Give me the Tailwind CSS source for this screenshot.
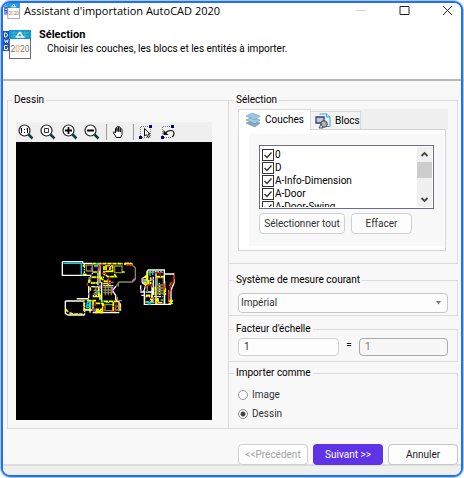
<!DOCTYPE html>
<html lang="fr">
<head>
    <meta charset="UTF-8">
    <meta name="viewport" content="width=device-width, initial-scale=1.0">
    <title>Assistant d'importation AutoCAD 2020</title>
    <script src="https://cdn.jsdelivr.net/npm/@tailwindcss/browser@4"></script>
</head>
<body class="bg-white text-black text-[10px] leading-[14px] font-[Roboto,sans-serif]">
    <svg class="hidden">
        <symbol id="dwg" viewBox="0 0 28 29">
            <rect x="0" y="1" width="6" height="20" fill="#1d4fc0"/>
            <path d="M1.500 3h2l1 2-1 2h-2zM1.500 9.500l1 3 1-2 1 2 .5-3M4.500 15.500h-3v4h3v-2" fill="none" stroke="#fff" stroke-width="1"/>
            <rect x="6.500" y=".5" width="21" height="28" fill="#fff" stroke="#666d78"/>
            <rect x="6" y="0" width="22" height="9" fill="#1397cc"/>
            <path d="M8 3h18M8 6h18M11 1v7M22 1v7" stroke="#5bc3e6" stroke-width=".6"/>
            <path d="M12.500 7h9M17 2l-3 4M17 2l3 5" stroke="#fff" stroke-width="1.500"/>
            <text x="7.500" y="21.500" font-size="8.500" fill="#777">2<tspan fill="#f29a1f">0</tspan>20</text>
        </symbol>
        <symbol id="magnifier" viewBox="0 0 16 16">
            <circle cx="6.500" cy="6.500" r="5.500" fill="#fff" stroke="#222" stroke-width="1.200"/>
            <path d="M10.500 10.500l4 4" stroke="#123c3c" stroke-width="2.500"/>
        </symbol>
        <symbol id="tick" viewBox="0 0 12 12">
            <path d="M2.500 6l2.500 2.500 4.500-5" fill="none" stroke="#333" stroke-width="1.300"/>
        </symbol>
    </svg>

    <div class="flex min-h-screen bg-[#a9cbff] rounded-[10px] p-px">
        <div class="flex min-w-0 flex-1 flex-col overflow-hidden rounded-[9px] border-2 border-[#1f6ffb] bg-[#f8f8f8]">
            <header class="h-[78px] border-b-2 border-[#b9b9b9] bg-white">
                <div class="flex h-[15px] items-center">
                    <svg class="ml-px h-4 w-4"><use href="#dwg"/></svg>
                    <h1 class="ml-1 flex-1 font-['Open_Sans',sans-serif] text-[11px]">Assistant d'importation AutoCAD 2020</h1>
                    <div class="flex items-center gap-8 pr-2">
                        <button type="button" aria-label="Réduire" disabled><svg class="h-[11px] w-[11px]"><path d="M0 5.500h10" stroke="#d2d2d2"/></svg></button>
                        <button type="button" aria-label="Agrandir"><svg class="h-[11px] w-[11px]"><path d="M1 1.500h9v8h-9z" fill="none" stroke="#222"/></svg></button>
                        <button type="button" aria-label="Fermer"><svg class="h-[11px] w-[11px]"><path d="M1 1l9 9M10 1l-9 9" stroke="#222"/></svg></button>
                    </div>
                </div>
                <div class="flex pt-2.5">
                    <svg class="mt-0.5 h-[29px] w-7"><use href="#dwg"/></svg>
                    <div class="ml-2">
                        <h2 class="text-[11px] font-bold">Sélection</h2>
                        <p class="ml-2">Choisir les couches, les blocs et les entités à importer.</p>
                    </div>
                </div>
            </header>

            <main class="flex flex-1 pt-3 pr-[3px] pl-1">
                <fieldset class="flex min-w-0 flex-1 flex-col border border-[#dcdcdc] px-2 pb-2">
                    <legend class="-ml-1 px-0.5">Dessin</legend>
                    <div class="mt-[15px] mr-2 flex h-5 items-center gap-[6px] bg-[#efefef] pl-0.5">
                        <button type="button" aria-label="Zoom 1:1"><svg class="h-4 w-4"><use href="#magnifier"/><path d="M3.500 4v5M9.500 4v5M6.500 5v1M6.500 8v1M2.500 5h1M8.500 5h1" stroke="#000"/></svg></button>
                        <button type="button" aria-label="Zoom fenêtre"><svg class="h-4 w-4"><use href="#magnifier"/><path d="M4.500 4.500h4v4h-4z" fill="none" stroke="#333"/></svg></button>
                        <button type="button" aria-label="Zoom avant"><svg class="h-4 w-4"><use href="#magnifier"/><path d="M3 6.500h7M6.500 3v7" stroke="#000" stroke-width="1.800"/></svg></button>
                        <button type="button" aria-label="Zoom arrière"><svg class="h-4 w-4"><use href="#magnifier"/><path d="M3 6.500h7" stroke="#000" stroke-width="1.800"/></svg></button>
                        <span class="-mr-0.5 h-4 w-px bg-[#9a9a9a]"></span>
                        <button type="button" aria-label="Déplacer"><svg class="h-4 w-4"><path d="M5.500 13.500l-3-4.500c-.5-1.500 1-1.500 2 0V4.500c0-1 1.500-1 1.500 0V7.500 3c0-1 1.700-1 1.700 0v4.500V3.500c0-1 1.600-1 1.600 0v4.500V5.500c0-1 1.700-1 1.700 0v5l-1.500 3z" fill="#fff" stroke="#111"/></svg></button>
                        <span class="-mr-0.5 h-4 w-px bg-[#9a9a9a]"></span>
                        <button type="button" aria-label="Sélectionner"><svg class="h-4 w-4"><path d="M2.500 12V2.500H11M4 13.500h8.500V4" fill="none" stroke="#777" stroke-dasharray="1 1"/><path d="M6.500 4.500v7.500l2-1.500 1.500 3 1.500-1-1.500-2.500h2z" fill="#fff" stroke="#111"/><path d="M1 12h3v3H1zM11 1h3v3h-3z" fill="#00007c"/></svg></button>
                        <button type="button" aria-label="Annuler la sélection"><svg class="h-4 w-4"><path d="M2.500 12V2.500H12M4 13.500h8" fill="none" stroke="#777" stroke-dasharray="1 1"/><path d="M5 9.500c3-4 9-4 9 0 0 2-1 3-2 3.500" fill="none" stroke="#111" stroke-width="1.200"/><path d="M3.500 6v5h5z" fill="#111"/><path d="M1 12h3v3H1zM11 1h3v3h-3z" fill="#00007c"/></svg></button>
                    </div>
                    <div class="mr-2 flex flex-1 items-center justify-center bg-black pt-[18px] pl-1.5">
                        <svg class="h-20 w-[135px]" viewBox="0 0 405 240" fill="none" stroke-width="4" role="img" aria-label="Plan d'étage">
                            <!-- left building -->
                            <g stroke="#fff">
                                <path d="M37 35h61v5M37 35v41h60M98 40h29M98 76h24v6M46 153h58M46 153v38l10 4h48M80 146h34v8M118 82v14M150 44v55M116 108v36M124 110h28M120 153v35M128 188h80M155 96v60M175 86v22M198 108l-10 14 9 14v12l10 8v28M104 180h24M144 68v38M222 42h26M160 107h30"/>
                                <path d="M103 40v36M127 44v30M104 158v36M128 136h26M136 110v20" stroke-dasharray="5 3"/>
                            </g>
                            <g stroke="#8a8845">
                                <path d="M245 44l11 10v34l-9 8h-40l-8 12M205 96v14M46 39h47M132 50h16v12M109 45h18v18h-18zM194 48h22v20h-22zM202 140v16M80 149h32M118 83h28v16h-22zM165 164h24v18h-24zM197 168h12v12h-12z"/>
                                <path d="M160 112h30M160 120h30M160 128h30M166 106v30M175 106v30M184 106v30M130 112h22M130 122h22M130 132h22M138 108v28M147 108v28"/>
                            </g>
                            <g stroke="#ff0">
                                <path d="M98 47h8M98 73h12M127 41h92M128 66h16M117 89v10M123 99h22M148 62v20h14M162 48v24l12 8h24l-5-8M168 48h20v16h-20zM180 48v18M216 66h8M150 82l14 12h18M224 40h18v6M126 81h18M121 112v10M146 110v24h10M150 136v14M162 154h46M211 160v22M138 160h20v27h-24M160 160v24M190 156v29M102 157v26M58 188l12 4h28M46 176l8 10M112 152h26M129 154v22M139 178h6v7h-6zM150 178h8v7h-8z" stroke-width="5" stroke-dasharray="13 2"/>
                                <path d="M128 140h22M158 101h24M106 178h18"/>
                            </g>
                            <path d="M94 38v38M40 40h52M112 156h10v16h-12zM132 47h12M138 126h8M110 165h14" stroke="#00cfff"/>
                            <path d="M146 44v12M172 50h8M155 70h14M176 82v20M228 45h18M112 98v9M136 156v12M161 168v16M150 45h8M198 158v16M180 184h18" stroke="#e21313"/>
                            <path d="M122 57h8M145 55v13M183 97h8M150 104v13M188 112v13M254 85l-8 10M116 130v6M132 175v11M207 152h8" stroke="#e14fff"/>
                            <path d="M140 42h9M118 160v9M145 70v6M152 153h9M168 158h10" stroke="#35e58b"/>

                            <!-- right building -->
                            <g stroke="#fff">
                                <path d="M293 60h50v105M293 60v14l-16 12v12l10 8-6 20M343 72h28v30l-8 18v42M318 64v98M283 128v35h40M272 106v20h14M274 136h10v16M323 163h40M293 74v22M306 108v28M288 126h18M310 80v56M344 160v-66"/>
                                <path d="M298 66h40M328 98v44M288 140h50" stroke-dasharray="5 3"/>
                            </g>
                            <g stroke="#8a8845">
                                <path d="M322 83h18v22h-18zM318 114h28M318 122h28M318 130h28M324 108v28M332 108v28M340 108v28M295 67h44M284 110h8v18M358 108l6-12M356 120v32"/>
                            </g>
                            <path d="M282 90h14v8h-14zM291 63v34M302 82v20M318 80h24M316 110v26M286 103h16M288 136h18v20M300 148h20v14M324 144v14h16M358 152h8v8h-8zM346 115v20M372 88v13M286 156h30M284 84l8-8" stroke="#ff0" stroke-width="5" stroke-dasharray="12 2"/>
                            <path d="M296 67h12v8M280 94h12M290 157h20M308 98v10M294 162h8" stroke="#00cfff"/>
                            <path d="M288 112c4-12 18-10 20 0M371 74v22l-10 14v10l-4 12v20M330 66v12M312 68h12M342 100v20" stroke="#e21313"/>
                            <path d="M276 84v12M272 118v11M302 88h10M325 160h8M310 142v12" stroke="#e14fff"/>
                            <path d="M300 62v16M318 64h6M332 150h8" stroke="#35e58b"/>
                        </svg>
                    </div>
                </fieldset>

                <div class="-ml-px flex w-[51%] flex-col">
                    <fieldset class="min-w-0 border border-[#dcdcdc] px-[9px] pb-3">
                        <legend class="-ml-1 px-0.5">Sélection</legend>
                        <div class="mt-0.5 flex items-end bg-[#efefef]" role="tablist">
                            <button type="button" role="tab" aria-selected="true" class="-mb-px flex h-[21px] w-[73px] items-center gap-1 border border-b-0 border-[#d9d9d9] bg-white pl-1.5">
                                <svg class="h-4 w-4 shrink-0"><path d="M1 11l6-2 8 2-5 4z" fill="#88a9c6" stroke="#6588aa" stroke-width=".6"/><path d="M1 8l6-3 8 3-5 4z" fill="#a9c8df" stroke="#6588aa" stroke-width=".6"/><path d="M1 4l6-3 8 3-5 4z" fill="#9cc4e4" stroke="#6f98bd" stroke-width=".6"/></svg>
                                Couches
                            </button>
                            <button type="button" role="tab" aria-selected="false" class="flex h-[18px] w-[50px] items-center gap-1 border border-b-0 border-l-0 border-[#d9d9d9] bg-[#f3f3f3] pl-1">
                                <svg class="h-4 w-4 shrink-0"><path d="M4.500 1h7l3.500 3v9.500H6" fill="#e6f4fd" stroke="#3f9fd6"/><path d="M11.500 1v3H15" fill="#bfe1f5" stroke="#3f9fd6"/><path d="M1 4h8v6H1z" fill="#c9c9b4" stroke="#2b3f87" stroke-width="1.300"/><circle cx="9" cy="11" r="3.300" fill="#b9b28a" stroke="#2b3f87"/><path d="M4 15l2-4 2 4z" fill="#e9e2b7" stroke="#2b3f87" stroke-width=".8"/></svg>
                                Blocs
                            </button>
                        </div>
                        <div class="mr-0.5 border border-[#d4d4d4] bg-white pt-1 pr-px pb-1 pl-[10px]" role="tabpanel">
                            <div class="bg-[#f8f8f8] px-2.5 pt-[11px] pb-3">
                                <div class="flex h-16 border border-[#6d6f7c] bg-white p-px">
                                    <div class="flex-1 overflow-hidden pt-px pl-px">
                                        <label class="flex h-[13px] items-center gap-px">
                                            <span class="grid"><input type="checkbox" checked class="col-start-1 row-start-1 h-3 w-3 appearance-none border border-[#333] bg-white"><svg class="pointer-events-none col-start-1 row-start-1 h-3 w-3"><use href="#tick"/></svg></span>0
                                        </label>
                                        <label class="flex h-[13px] items-center gap-px">
                                            <span class="grid"><input type="checkbox" checked class="col-start-1 row-start-1 h-3 w-3 appearance-none border border-[#333] bg-white"><svg class="pointer-events-none col-start-1 row-start-1 h-3 w-3"><use href="#tick"/></svg></span>D
                                        </label>
                                        <label class="flex h-[13px] items-center gap-px">
                                            <span class="grid"><input type="checkbox" checked class="col-start-1 row-start-1 h-3 w-3 appearance-none border border-[#333] bg-white"><svg class="pointer-events-none col-start-1 row-start-1 h-3 w-3"><use href="#tick"/></svg></span>A-Info-Dimension
                                        </label>
                                        <label class="flex h-[13px] items-center gap-px">
                                            <span class="grid"><input type="checkbox" checked class="col-start-1 row-start-1 h-3 w-3 appearance-none border border-[#333] bg-white"><svg class="pointer-events-none col-start-1 row-start-1 h-3 w-3"><use href="#tick"/></svg></span>A-Door
                                        </label>
                                        <label class="flex h-[13px] items-center gap-px">
                                            <span class="grid"><input type="checkbox" checked class="col-start-1 row-start-1 h-3 w-3 appearance-none border border-[#333] bg-white"><svg class="pointer-events-none col-start-1 row-start-1 h-3 w-3"><use href="#tick"/></svg></span>A-Door-Swing
                                        </label>
                                    </div>
                                    <div class="flex w-[15px] flex-col bg-[#f0f0f0]">
                                        <svg class="h-[15px] w-[15px]"><path d="M4.500 9l3-3 3 3" fill="none" stroke="#444" stroke-width="1.800"/></svg>
                                        <div class="h-4 bg-[#cdcdcd]"></div>
                                        <svg class="mt-auto h-[15px] w-[15px]"><path d="M4.500 6l3 3 3-3" fill="none" stroke="#444" stroke-width="1.800"/></svg>
                                    </div>
                                </div>
                                <div class="mt-1 flex gap-1.5">
                                    <button type="button" class="h-[21px] w-[86px] shrink-0 rounded border border-[#d0d0d0] bg-[#fdfdfd] whitespace-nowrap text-[#333]">Sélectionner tout</button>
                                    <button type="button" class="h-[21px] w-[61px] rounded border border-[#d0d0d0] bg-[#fdfdfd] text-[#333]">Effacer</button>
                                </div>
                            </div>
                        </div>
                    </fieldset>

                    <fieldset class="mt-[9px] min-w-0 border border-[#dcdcdc] px-[9px] pb-0.5">
                        <legend class="-ml-1 px-0.5"><label for="unit">Système de mesure courant</label></legend>
                        <div class="relative mt-1.5">
                            <select id="unit" class="h-5 w-full appearance-none rounded border border-[#c6c6c6] bg-[#fdfdfd] px-0.5 text-[#333]">
                                <option>Impérial</option>
                                <option>Métrique</option>
                            </select>
                            <svg class="pointer-events-none absolute top-2 right-[7px] h-1 w-[5px]"><path d="M0 0h5L2.500 3.500z" fill="#777"/></svg>
                        </div>
                    </fieldset>

                    <fieldset class="mt-1.5 min-w-0 border border-[#dcdcdc] px-[9px] pb-[5px]">
                        <legend class="-ml-1 px-0.5"><label for="factor">Facteur d'échelle</label></legend>
                        <div class="mt-0.5 flex h-[18px]">
                            <input id="factor" type="text" value="1" class="w-[101px] rounded border border-[#d0d0d0] bg-[#fdfdfd] px-[5px] text-[#333]">
                            <span class="flex-1 text-center">=</span>
                            <input type="text" value="1" aria-label="Résultat" disabled class="w-[89px] rounded border border-[#a9a9a9] bg-[#f7f7f7] px-[5px] text-[#777]">
                        </div>
                    </fieldset>

                    <fieldset class="mt-1 min-w-0 border border-[#dcdcdc] px-[9px] pb-[7px]">
                        <legend class="-ml-1 px-0.5">Importer comme</legend>
                        <label class="mt-2 flex items-center gap-1 text-[#333]"><input type="radio" name="as" class="h-2.5 w-2.5 appearance-none rounded-full border border-[#999] bg-white">Image</label>
                        <label class="mt-[5px] flex items-center gap-1 text-[#333]"><input type="radio" name="as" checked class="h-2.5 w-2.5 appearance-none rounded-full border border-[#888] bg-[radial-gradient(circle,#444_2px,white_3px)]">Dessin</label>
                    </fieldset>
                </div>
            </main>

            <footer class="mt-[15px] h-[31px] bg-[linear-gradient(#f8f8f8_20px,#dedede_20px,#dedede_22px,#efefef_22px)] pr-[3px]">
                <div class="flex justify-end gap-[5px]">
                    <button type="button" disabled class="h-[21px] w-[70px] rounded border border-[#d0d0d0] bg-[#fdfdfd] whitespace-nowrap text-[#a3a3a3]">&lt;&lt;Précédent</button>
                    <button type="button" class="h-[21px] w-[70px] rounded-sm bg-[#5f33e6] text-white">Suivant &gt;&gt;</button>
                    <button type="button" class="h-[21px] w-[70px] rounded border border-[#c8c8c8] bg-[#fdfdfd] text-[#222]">Annuler</button>
                </div>
            </footer>
        </div>
    </div>
</body>
</html>
